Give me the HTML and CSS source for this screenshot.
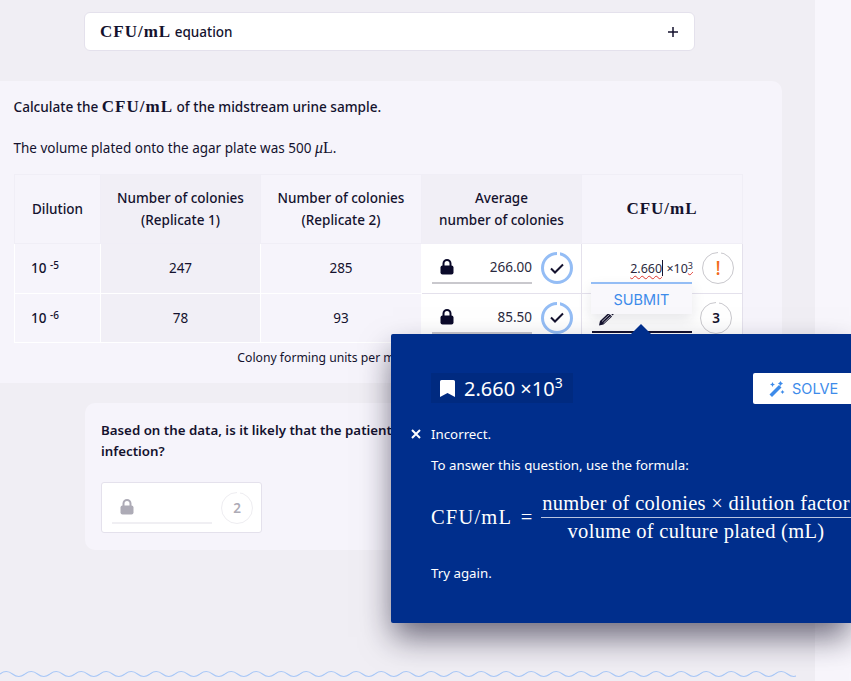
FILE: index.html
```html
<!DOCTYPE html>
<html lang="en">
<head>
<meta charset="utf-8">
<title>CFU/mL</title>
<link rel="stylesheet" href="styles.css">
</head>
<body>
<div class="page">
  <main class="main">
    <div class="accordion">
      <span class="acc-title"><span class="math-b">CFU/mL</span> equation</span>
      <svg class="plus" width="12" height="12" viewBox="0 0 12 12"><path d="M6 1v10M1 6h10" stroke="#14122e" stroke-width="1.5"/></svg>
    </div>
    <section class="card-main">
      <p class="q-title">Calculate the <span class="math-b">CFU/mL</span> of the midstream urine sample.</p>
      <p class="q-text">The volume plated onto the agar plate was 500 <span class="math"><i>μ</i>L</span>.</p>
      <table class="data">
        <colgroup><col class="c1"><col class="c2"><col class="c3"><col class="c4"><col class="c5"></colgroup>
        <thead>
          <tr>
            <th class="h-light">Dilution</th>
            <th class="h-dark">Number of colonies<br>(Replicate 1)</th>
            <th class="h-light">Number of colonies<br>(Replicate 2)</th>
            <th class="h-dark">Average<br>number of colonies</th>
            <th class="h-light"><span class="math-b">CFU/mL</span></th>
          </tr>
        </thead>
        <tbody>
          <tr>
            <td class="dil">10 <sup>-5</sup></td><td class="shade">247</td><td>285</td>
            <td class="cell-in">
              <div class="answer">
                <div class="field locked">
                  <svg class="lock" width="14" height="16" viewBox="0 0 14 16"><path d="M3.500 7V4.500a3.500 3.500 0 0 1 7 0V7" fill="none" stroke="#0b0a2a" stroke-width="2"/><rect x="0.5" y="6.500" width="13" height="9" rx="2" fill="#0b0a2a"/></svg>
                  <span>266.00</span>
                </div>
                <div class="ring ring-ok"><svg width="14" height="11" viewBox="0 0 14 11"><path d="M1 5.500l4 4 8-8" fill="none" stroke="#14122e" stroke-width="2"/></svg></div>
              </div>
            </td>
            <td class="cell-in">
              <div class="answer">
                <div class="field plain">
                  <span class="entry"><span class="squig">2.660</span><span class="caret"></span> ×10<sup class="squig">3</sup></span>
                </div>
                <div class="ring ring-warn">!</div>
              </div>
            </td>
          </tr>
          <tr>
            <td class="dil">10 <sup>-6</sup></td><td class="shade">78</td><td>93</td>
            <td class="cell-in">
              <div class="answer">
                <div class="field locked">
                  <svg class="lock" width="14" height="16" viewBox="0 0 14 16"><path d="M3.500 7V4.500a3.500 3.500 0 0 1 7 0V7" fill="none" stroke="#0b0a2a" stroke-width="2"/><rect x="0.5" y="6.500" width="13" height="9" rx="2" fill="#0b0a2a"/></svg>
                  <span>85.50</span>
                </div>
                <div class="ring ring-ok"><svg width="14" height="11" viewBox="0 0 14 11"><path d="M1 5.500l4 4 8-8" fill="none" stroke="#14122e" stroke-width="2"/></svg></div>
              </div>
            </td>
            <td class="cell-in">
              <div class="answer">
                <div class="field active">
                  <svg class="pencil" width="16" height="15" viewBox="0 0 16 15"><path d="M1 14.500l1-4.500 8.500-8 3.500 3.500-8.500 8z" fill="#14122e"/><path d="M4 10.500l7.500-7M5.500 12l7-6.500" stroke="#fff" stroke-width=".7"/><path d="M11.500 1.200l1-1 3.200 3-1 1.200z" fill="#14122e"/></svg>
                </div>
                <div class="ring ring-num">3</div>
              </div>
            </td>
          </tr>
        </tbody>
      </table>
      <p class="caption">Colony forming units per milliliter of urine sample</p>
    </section>
    <section class="card-q2">
      <p class="q2-text">Based on the data, is it likely that the patient has a urinary tract infection?</p>
      <div class="q2-box">
        <div class="field faded">
          <svg class="lock" width="14" height="16" viewBox="0 0 14 16"><path d="M3.500 7V4.500a3.500 3.500 0 0 1 7 0V7" fill="none" stroke="#adabb6" stroke-width="2"/><rect x="0.5" y="6.500" width="13" height="9" rx="2" fill="#adabb6"/></svg>
        </div>
        <div class="ring ring-faded">2</div>
      </div>
    </section>
    <svg class="wave" width="796" height="8" viewBox="0 0 796 8"><defs><pattern id="w" width="25" height="8" patternUnits="userSpaceOnUse"><path d="M0 4q6.250-5 12.500 0t12.500 0" fill="none" stroke="#a9c8f7" stroke-width="1.2"/></pattern></defs><rect width="796" height="8" fill="url(#w)"/></svg>
  </main>
  <aside class="rail"></aside>
</div>

<div class="submit-pop">SUBMIT</div>

<div class="feedback">
  <span class="arrow"></span>
  <div class="fb-head">
    <div class="fb-answer">
      <svg width="15" height="17" viewBox="0 0 15 17"><path d="M0 1.500A1.500 1.500 0 0 1 1.500 0h12A1.500 1.500 0 0 1 15 1.500V17l-7.500-4L0 17z" fill="#fff"/></svg>
      <span>2.660 ×10<sup>3</sup></span>
    </div>
    <button class="solve">
      <svg width="16" height="16" viewBox="0 0 16 16"><path d="M.5 13.500L10 4l2.500 2.500L3 16z" fill="#3d8bea"/><path d="M11.500 0l.9 1.600L14 2.500l-1.600.9-.9 1.600-.9-1.600L9 2.500l1.600-.9zM3.500 1l.8 1.700L6 3.500l-1.700.8-.8 1.700-.8-1.700L1 3.500l1.700-.8zM13.500 9l.7 1.300 1.300.7-1.300.7-.7 1.300-.7-1.300-1.300-.7 1.300-.7z" fill="#3d8bea"/></svg>
      SOLVE
    </button>
  </div>
  <div class="fb-status">
    <svg width="10" height="10" viewBox="0 0 10 10"><path d="M1 1l8 8M9 1l-8 8" stroke="#fff" stroke-width="2"/></svg>
    <span>Incorrect.</span>
  </div>
  <p class="fb-line">To answer this question, use the formula:</p>
  <div class="formula">
    <span class="f-left">CFU/mL =</span>
    <span class="frac">
      <span class="num">number of colonies × dilution factor</span>
      <span class="den">volume of culture plated (mL)</span>
    </span>
  </div>
  <p class="fb-line try">Try again.</p>
</div>
</body>
</html>
```

FILE: styles.css
```css
* { box-sizing: border-box; }
html, body { margin: 0; padding: 0; height: 100%; overflow: hidden; }
body {
  font-family: "Noto Sans", sans-serif;
  font-size: 13.5px;
  color: #14122e;
  background: #f0eef4;
  position: relative;
}
p { margin: 0; }
.page { display: flex; width: 851px; height: 681px; }
.main { width: 815px; flex: none; padding-top: 12px; position: relative; }
.rail { flex: 1; background: #f8f6fc; }

.math, .math-b { font-family: "Liberation Serif", serif; }
.math-b { font-weight: 700; font-size: 17px; letter-spacing: 1px; }
.math { font-size: 16px; }

.accordion {
  width: 611px; height: 39px; margin-left: 84px;
  background: #fff; border: 1px solid #e4e1ec; border-radius: 6px;
  display: flex; align-items: center; justify-content: space-between;
  padding: 0 15px;
}
.acc-title { font-weight: 500; font-size: 13.5px; }

.card-main {
  width: 782px; height: 302px; margin-top: 30px;
  background: #f6f4fb; border-radius: 0 10px 10px 0;
  padding: 16px 0 0 13.5px;
}
.q-title { font-weight: 500; font-size: 13.6px; line-height: 20px; }
.q-text { margin-top: 21px; line-height: 20px; }

.data {
  margin: 16px 0 0 .5px; width: 728px; table-layout: fixed;
  border-collapse: collapse; text-align: center;
}
.c1 { width: 86px; } .c2 { width: 160px; } .c3 { width: 161px; } .c4 { width: 160px; } .c5 { width: 161px; }
.data th {
  height: 69px; font-weight: 500; line-height: 22px; padding: 0;
  border: 1px solid #f0eef6;
}
.h-light { background: #f6f4fb; }
.h-dark { background: #f1eff6; }
.data td {
  height: 49.500px; padding: 0; background: #f6f4fb;
  border: 1px solid #fff;
}
.data td.shade { background: #f1eff6; }
.data td.dil { font-weight: 500; text-align: left; padding-left: 16px; }
.data sup { font-size: 10px; line-height: 0; vertical-align: 4px; }
.data td.cell-in { background: #fff; border: 1px solid #e4e1ec; }

.answer { display: flex; align-items: center; gap: 9px; padding-left: 10px; height: 48px; }
.field {
  width: 100px; height: 32px; flex: none; display: flex; align-items: center;
  justify-content: space-between; padding: 0 0 0 8px;
  color: #2b2a40;
  border-bottom: 2px solid #c9c8cd;
}
.field.plain { justify-content: flex-end; border-bottom: 0; }
.field.active { border-bottom: 2px solid #14122e; padding-left: 6px; height: 31px; }
.pencil { margin-top: 3px; }
.field.faded { border-bottom-color: #f0eff3; }

.entry { font-size: 12.5px; white-space: nowrap; margin-right: -1px; }
.entry sup { font-size: 9px; vertical-align: 4px; }
.squig { text-decoration: underline wavy #e0382f 1px; text-underline-offset: 2px; }
.caret { display: inline-block; width: 1px; height: 16px; background: #14122e; vertical-align: -3px; }

.ring {
  position: relative;
  width: 32px; height: 32px; border-radius: 50%; flex: none;
  display: flex; align-items: center; justify-content: center;
  border: 1px solid #c9c8cd; font-weight: 600; font-size: 13.5px;
}
.ring::before {
  content: ""; position: absolute; left: 50%; top: -3px; width: 3px; height: 6px;
  background: #fff;
}
.ring-ok { border: 3px solid #94bdf5; }
.ring-ok::before { top: -4px; }
.ring-warn { color: #f26b1d; font-size: 19px; font-weight: 500; margin-left: 1px; }
.ring-num { color: #14122e; margin-left: -1px; }
.ring-faded { border-color: #eeedf1; color: #adabb6; }

.caption { width: 733px; margin-top: 6px; text-align: center; font-size: 12.2px; line-height: 18px; }

.card-q2 {
  width: 610px; height: 147px; margin: 20px 0 0 85px;
  background: #f6f4fb; border-radius: 10px;
  padding: 17px 16px 0;
}
.q2-text { font-weight: 600; font-size: 13.3px; line-height: 21px; width: 440px; }
.q2-box {
  width: 161px; height: 51px; margin-top: 20px; background: #fff;
  border: 1px solid #e4e1ec; border-radius: 3px;
  display: flex; align-items: center; gap: 9px; padding-left: 10px;
}

.wave { position: absolute; left: 0; top: 670px; }

.submit-pop {
  position: absolute; left: 591px; top: 282px; width: 101px; height: 32px;
  background: #f9f8fc; border-top: 2px solid #94bdf5;
  color: #3d8bea; font-family: "Inter", sans-serif; font-size: 14.5px;
  display: flex; align-items: center; justify-content: center;
  box-shadow: 0 6px 14px rgba(30, 25, 60, .1);
}

.feedback {
  position: absolute; left: 391px; top: 334px; width: 460px; height: 289px;
  background: #002e8c; color: #fff; border-radius: 2px 0 0 2px;
  padding: 39px 0 0 40px;
  box-shadow: 0 16px 30px -2px rgba(20, 15, 40, .6);
  font-size: 13.3px;
}
.arrow {
  position: absolute; left: 240px; top: -10px; width: 0; height: 0;
  border-left: 10px solid transparent; border-right: 10px solid transparent;
  border-bottom: 10px solid #002e8c;
}
.fb-head { display: flex; align-items: flex-start; justify-content: space-between; height: 31px; }
.fb-answer {
  display: flex; align-items: center; gap: 9px; width: 142px; height: 30px; padding: 0 0 0 9px;
  background: #002a80; font-size: 20px; white-space: nowrap;
}
.fb-answer sup { font-size: 14px; line-height: 0; vertical-align: 8px; }
.solve {
  width: 98px; height: 31px; border: 0; background: #fff; border-radius: 2px 0 0 2px;
  color: #3d8bea; font-family: "Inter", sans-serif; font-size: 14.5px;
  display: flex; align-items: center; gap: 7px; padding: 0 0 0 16px;
}
.fb-status { position: relative; margin-top: 21px; height: 18px; display: flex; align-items: center; }
.fb-status svg { position: absolute; left: -20px; top: 4px; }
.fb-line { margin-top: 13px; line-height: 18px; }
.formula {
  display: flex; align-items: center; margin-top: 16px; gap: 6px;
  font-family: "Liberation Serif", serif; font-size: 20.5px; white-space: nowrap;
  letter-spacing: .3px;
}
.f-left { word-spacing: 3px; letter-spacing: 1.2px; width: 104px; }
.frac { display: flex; flex-direction: column; align-items: center; width: 310px; }
.num { border-bottom: 1px solid #b9c4e0; width: 100%; text-align: center; line-height: 26px; padding-bottom: 1px; }
.den { line-height: 27px; }
.try { margin-top: 19px; }
```
